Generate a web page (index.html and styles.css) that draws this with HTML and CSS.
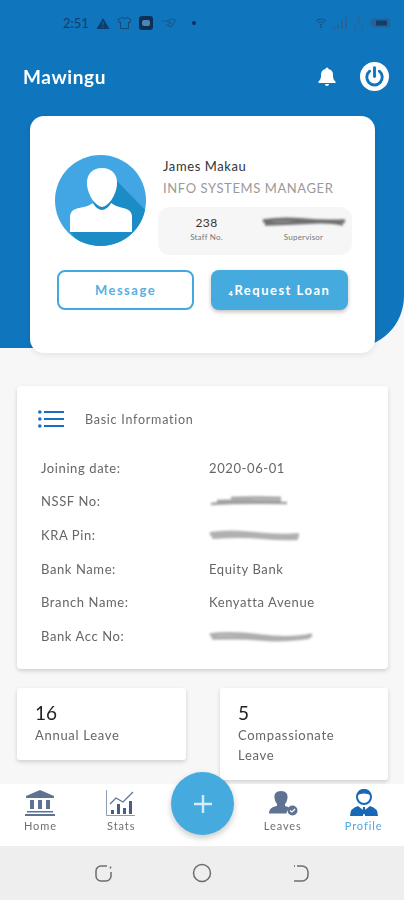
FILE: index.html
```html
<!DOCTYPE html>
<html lang="en">
<head>
<meta charset="utf-8">
<title>Mawingu</title>
<link rel="stylesheet" href="styles.css">
</head>
<body>
<div class="phone">
  <main class="content">
    <section class="hero">
      <div class="status">
        <div class="status-left">
          <span class="time">2:51</span>
          <svg width="14" height="13" viewBox="0 0 15 14"><path d="M7.500 1 14.500 13H.5Z" fill="#0d3d6b"/><path d="M7 5h1v4H7zM7 10h1v1.500H7z" fill="#0f75bd"/></svg>
          <svg width="15" height="14" viewBox="0 0 15 14"><path d="M5 1.500 1 3.500l1 3 1.500-.5v6.500h8V6l1.500.5 1-3-4-2Q7.500 4 5 1.500Z" fill="none" stroke="#164a78" stroke-width="1"/></svg>
          <svg width="14" height="14" viewBox="0 0 14 14"><rect width="14" height="14" rx="3" fill="#0b3157"/><rect x="3" y="4" width="8" height="6" rx="2" fill="#4f86b4"/></svg>
          <svg width="17" height="12" viewBox="0 0 17 12"><path d="M1 4h6l4 2-4 2 4 2 5-7-5-1-4 2" fill="none" stroke="#1d5a90" stroke-width="1.100"/></svg>
          <span class="dot"></span>
        </div>
        <div class="status-right">
          <svg width="12" height="10" viewBox="0 0 12 10"><path d="M1 3q5-4 10 0M3 5q3-2.500 6 0M5 7q1-1 2 0" fill="none" stroke="#1d5486" stroke-width="1.200"/><circle cx="6" cy="9" r="1" fill="#1d5486"/></svg>
          <svg width="16" height="12" viewBox="0 0 16 12"><path d="M1 10h2v2H1zM5 8h2v4H5zM9 4h2v8H9zM13 0h2v12h-2z" fill="#2a6295"/></svg>
          <svg width="11" height="14" viewBox="0 0 11 14"><path d="M5.500 0v5L1 11M5.500 5 10 11M1 13h2M8 13h2" fill="none" stroke="#2a6295" stroke-width="1"/></svg>
          <svg width="22" height="10" viewBox="0 0 22 10"><path d="M4 .5h17v9H4L.5 5Z" fill="#2a6295"/><rect x="7" y="2.500" width="11" height="5" fill="#0f3f6d"/></svg>
        </div>
      </div>
      <header class="appbar">
        <h1 class="brand">Mawingu</h1>
        <div class="appbar-actions">
          <svg width="20" height="21" viewBox="0 0 20 21"><path d="M10 1.500a1.500 1.500 0 0 1 1.500 1.500 6 6 0 0 1 4.500 6c0 4 1 5 2.500 6.500V17H1.500v-1.500C3 14 4 13 4 9a6 6 0 0 1 4.500-6A1.500 1.500 0 0 1 10 1.500ZM8 18h4a2 2 0 0 1-4 0Z" fill="#fff"/></svg>
          <svg width="29" height="29" viewBox="0 0 30 30"><circle cx="15" cy="15" r="15" fill="#fff"/><path d="M10 9.500a8 8 0 1 0 10 0" fill="none" stroke="#0f75bd" stroke-width="3" stroke-linecap="round"/><path d="M15 6v9" stroke="#0f75bd" stroke-width="3" stroke-linecap="round"/></svg>
        </div>
      </header>
      <article class="profile-card">
        <div class="profile-top">
          <svg class="avatar" width="91" height="91" viewBox="0 0 91 91">
            <defs><clipPath id="disc"><circle cx="45.500" cy="45.500" r="45.500"/></clipPath></defs>
            <circle cx="45.500" cy="45.500" r="45.500" fill="#43a6e4"/>
            <g clip-path="url(#disc)"><path d="M58 22 100 65V95H30L15 77Z" fill="#1b8cc5"/></g>
            <path d="M47 13c10 0 16 7 15 17-1 10-8 21-15 22-7-1-14-12-15-22-1-10 5-17 15-17Z" fill="#fff"/>
            <path d="M15 77V62c0-5 3-8 9-9 7-1 11-3 14-5 2 4 6 7 9 7s7-3 9-7c3 2 7 4 12 5 6 1 9 4 9 9v15Z" fill="#fff"/>
          </svg>
          <div class="identity">
            <div class="name">James Makau</div>
            <div class="role">INFO SYSTEMS MANAGER</div>
            <div class="stats-box">
              <div class="stat"><span class="stat-value">238</span><span class="stat-label">Staff No.</span></div>
              <div class="stat">
                <svg class="smudge" width="86" height="10" viewBox="0 0 86 10"><path d="M2 4q20-3 40-1t42 1M4 7q30-1 48-2t30 2" fill="none" stroke="#6f6f6f" stroke-width="3.500"/></svg>
                <span class="stat-label">Supervisor</span>
              </div>
            </div>
          </div>
        </div>
        <div class="actions">
          <button class="btn btn-outline">Message</button>
          <button class="btn btn-solid">₄Request Loan</button>
        </div>
      </article>
    </section>

    <section class="info-card">
      <div class="info-head">
        <svg width="26" height="18" viewBox="0 0 26 18"><g fill="#1a6fc0"><circle cx="1.800" cy="2" r="1.800"/><circle cx="1.800" cy="9" r="1.800"/><circle cx="1.800" cy="16" r="1.800"/><rect x="6" y="1" width="20" height="2"/><rect x="6" y="8" width="20" height="2"/><rect x="6" y="15" width="20" height="2"/></g></svg>
        <span class="info-title">Basic Information</span>
      </div>
      <dl class="info-grid">
        <dt>Joining date:</dt><dd>2020-06-01</dd>
        <dt>NSSF No:</dt><dd><svg class="smudge" width="80" height="12" viewBox="0 0 80 12"><path d="M2 9q30-2 76-1M8 6q30-1 64 0M22 3q25-1 50 0" fill="none" stroke="#a0a0a0" stroke-width="2.600"/></svg></dd>
        <dt>KRA Pin:</dt><dd><svg class="smudge" width="92" height="14" viewBox="0 0 92 14"><path d="M1 6q20-3 45 0t44 1M3 9q30-2 50 0t36 1" fill="none" stroke="#b0b0b0" stroke-width="4"/></svg></dd>
        <dt>Bank Name:</dt><dd>Equity Bank</dd>
        <dt>Branch Name:</dt><dd>Kenyatta Avenue</dd>
        <dt>Bank Acc No:</dt><dd><svg class="smudge" width="104" height="12" viewBox="0 0 104 12"><path d="M1 5q20-3 50 1t52-1M3 8q30-1 50 1t48-2" fill="none" stroke="#aeaeae" stroke-width="3.600"/></svg></dd>
      </dl>
    </section>

    <section class="leave-row">
      <div class="leave-card"><div class="leave-num">16</div><div class="leave-label">Annual Leave</div></div>
      <div class="leave-card"><div class="leave-num">5</div><div class="leave-label">Compassionate Leave</div></div>
    </section>
  </main>

  <nav class="tabbar">
    <div class="tab">
      <svg width="30" height="26" viewBox="0 0 30 26"><path d="M15 0 29 6v2H1V6Z" fill="#5d7391"/><path d="M5 10h4v9H5zM13 10h4v9h-4zM21 10h4v9h-4z" fill="#5d7391"/><path d="M2 21h26v1.500H2zM0 24h30v2H0z" fill="#5d7391"/></svg>
      <span>Home</span>
    </div>
    <div class="tab">
      <svg width="30" height="26" viewBox="0 0 30 26"><path d="M.5 0v25.500H29" fill="none" stroke="#8c9db3" stroke-width="1"/><path d="M4 14l6-6 7 4 10-10" fill="none" stroke="#5d7391" stroke-width="1.200"/><path d="M5 20h3v4H5zM11 14h3v10h-3zM17 18h3v6h-3zM23 11h3v13h-3z" fill="#47607f"/></svg>
      <span>Stats</span>
    </div>
    <div class="tab tab-spacer"></div>
    <div class="tab">
      <svg width="30" height="26" viewBox="0 0 30 26"><path d="M13 1c5 0 7 3 6.500 7-.4 3-1.500 5-2.500 6v2c3 .5 4 1.500 4.500 2.500-2 1-3 3-3 5H1c0-5 4-7 8-7.500V14C8 13 7 11 6.500 8 6 4 8 1 13 1Z" fill="#5d7391"/><circle cx="24.500" cy="20.500" r="5" fill="#5d7391"/><path d="M22 20.500l2 1.500 3-3" fill="none" stroke="#fff" stroke-width="1.200"/></svg>
      <span>Leaves</span>
    </div>
    <div class="tab tab-active">
      <svg width="30" height="28" viewBox="0 0 30 28"><circle cx="15" cy="9" r="7" fill="#fff" stroke="#1769b5" stroke-width="2"/><path d="M8 7q1-6 7-6t7 6q-7-3-14 0Z" fill="#1769b5"/><path d="M1 28q0-8 8-10l5 4v6ZM29 28q0-8-8-10l-5 4v6Z" fill="#1769b5"/><path d="M14 19h2l.5 6-1.500 2-1.500-2Z" fill="#1769b5"/></svg>
      <span>Profile</span>
    </div>
    <button class="fab" aria-label="Add">
      <svg width="18" height="18" viewBox="0 0 18 18"><path d="M9 0v18M0 9h18" stroke="#d5ecf9" stroke-width="2.400"/></svg>
    </button>
  </nav>

  <footer class="sysnav">
    <svg width="20" height="20" viewBox="0 0 20 20"><path d="M14 3H8a5 5 0 0 0-5 5v5a5 5 0 0 0 5 5h5a5 5 0 0 0 5-5V9M17.500 3.500v2" fill="none" stroke="#6d6d6d" stroke-width="1.500"/></svg>
    <svg width="20" height="20" viewBox="0 0 20 20"><circle cx="10" cy="10" r="8.500" fill="none" stroke="#6d6d6d" stroke-width="1.500"/></svg>
    <svg width="20" height="20" viewBox="0 0 20 20"><path d="M3 3h1M6 3h5a6 6 0 0 1 6 6v3a6 6 0 0 1-6 6H3" fill="none" stroke="#6d6d6d" stroke-width="1.500"/></svg>
  </footer>
</div>
</body>
</html>
```
FILE: styles.css
```css
* { box-sizing: border-box; }
html, body { margin: 0; padding: 0; }
body {
  width: 404px;
  height: 900px;
  overflow: hidden;
  background: #f7f7f7;
  font-family: Lato, "Open Sans", sans-serif;
  color: #555;
}
.phone {
  width: 404px;
  height: 900px;
  display: flex;
  flex-direction: column;
  filter: blur(0.5px);
}
.content {
  flex: 1;
  min-height: 0;
  overflow: hidden;
}

/* hero */
.hero {
  height: 348px;
  background: #0f75bd;
  border-bottom-right-radius: 52px;
  padding-top: 15px;
}
.status {
  height: 16px;
  padding: 0 13px 0 63px;
  display: flex;
  justify-content: space-between;
  align-items: center;
}
.status-left, .status-right { display: flex; align-items: center; }
.status-left { gap: 7px; }
.status-right { gap: 5px; }
.time { font-size: 13px; color: #143f69; }
.dot { width: 4px; height: 4px; border-radius: 50%; background: #0d3157; margin-left: 8px; }
.appbar {
  margin-top: 21px;
  height: 48px;
  padding: 0 15px 0 23px;
  display: flex;
  justify-content: space-between;
  align-items: center;
}
.brand {
  margin: 0;
  font-size: 19px;
  font-weight: 700;
  letter-spacing: .6px;
  color: #fff;
}
.appbar-actions { display: flex; align-items: center; gap: 23px; }

/* profile card */
.profile-card {
  margin: 16px 29px 0 30px;
  height: 237px;
  padding: 39px 24px 0 25px;
  background: #fff;
  border-radius: 14px;
  box-shadow: 0 2px 6px rgba(0,0,0,.08);
}
.profile-top { display: flex; }
.avatar { flex: none; }
.identity { margin-left: 12px; flex: 1; margin-top: 2px; }
.name { font-size: 13px; line-height: 18px; color: #333; padding-left: 5px; margin-top: 0; letter-spacing: .6px; }
.role { font-size: 13px; line-height: 18px; margin-top: 4px; color: #9a9a9a; padding-left: 5px; letter-spacing: .6px; white-space: nowrap; }
.stats-box {
  margin-top: 10px;
  margin-right: -1px;
  height: 48px;
  border-radius: 12px;
  background: #f6f6f6;
  display: grid;
  grid-template-columns: 1fr 1fr;
}
.stat { display: flex; flex-direction: column; align-items: center; padding-top: 8px; }
.stat-value { font-size: 12px; line-height: 15px; color: #333; letter-spacing: .3px; }
.stat-label { font-size: 8px; line-height: 11px; color: #777; margin-top: 2px; letter-spacing: .2px; }
.smudge { display: block; filter: blur(1.1px); }
.stat .smudge { margin-top: 2px; margin-bottom: 3px; }
.actions {
  display: grid;
  grid-template-columns: 137px 137px;
  gap: 17px;
  margin: 15px 0 0 2px;
}
.btn {
  height: 40px;
  border-radius: 8px;
  font-family: inherit;
  font-size: 13px;
  letter-spacing: 1.500px;
  font-weight: 700;
  padding: 0;
}
.btn-outline { background: #fff; border: 2px solid #42a9de; color: #58afe0; }
.btn-solid { background: #45abdf; border: 0; color: #fff; box-shadow: 0 2px 4px rgba(0,0,0,.25); }

/* info card */
.info-card {
  margin: 38px 16px 0 17px;
  height: 283px;
  padding: 24px 24px 0 21px;
  background: #fff;
  border-radius: 4px;
  box-shadow: 0 2px 4px rgba(0,0,0,.16);
}
.info-head { display: flex; align-items: center; gap: 21px; height: 18px; }
.info-title { font-size: 12.500px; color: #6a6a6a; letter-spacing: .75px; }
.info-grid {
  margin: 23px 0 0 3px;
  display: grid;
  grid-template-columns: 168px 1fr;
  grid-auto-rows: 33.600px;
  align-items: center;
  font-size: 13px;
  letter-spacing: .6px;
  color: #666;
}
.info-grid dt, .info-grid dd { margin: 0; display: flex; align-items: center; }

/* leave cards */
.leave-row {
  margin: 19px 16px 0 17px;
  display: grid;
  grid-template-columns: 169px 168px;
  justify-content: space-between;
  align-items: start;
}
.leave-card {
  padding: 14px 30px 15px 18px;
  background: #fff;
  border-radius: 3px;
  box-shadow: 0 2px 4px rgba(0,0,0,.16);
}
.leave-num { font-size: 19px; line-height: 22px; color: #222; }
.leave-label { font-size: 13px; line-height: 20px; color: #666; letter-spacing: .7px; margin-top: 1px; }

/* tab bar */
.tabbar {
  flex: none;
  height: 62px;
  position: relative;
  background: #fff;
  display: grid;
  grid-template-columns: repeat(5, 1fr);
}
.tab {
  display: flex;
  flex-direction: column;
  align-items: center;
  justify-content: flex-end;
  padding-bottom: 14px;
  font-size: 11px;
  line-height: 13px;
  letter-spacing: .9px;
  color: #6f6f6f;
  gap: 3px;
}
.tab-active { color: #4aa9e0; }
.fab {
  position: absolute;
  left: 171px;
  top: -12px;
  width: 63px;
  height: 63px;
  border: 0;
  border-radius: 50%;
  background: #45abdf;
  box-shadow: 0 3px 6px rgba(0,0,0,.22);
  display: flex;
  align-items: center;
  justify-content: center;
  padding: 0;
}

/* system nav */
.sysnav {
  flex: none;
  height: 54px;
  background: #eeeeee;
  display: flex;
  justify-content: center;
  align-items: center;
  gap: 79px;
}
```
